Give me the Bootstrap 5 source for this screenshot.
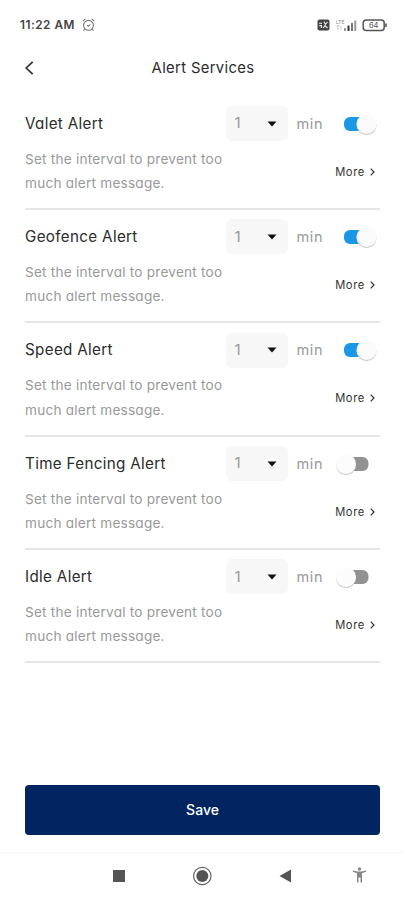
<!DOCTYPE html>
<html lang="en">
<head>
<meta charset="utf-8">
<meta name="viewport" content="width=device-width, initial-scale=1">
<title>Alert Services</title>
<link href="https://cdn.jsdelivr.net/npm/bootstrap@5.3.0/dist/css/bootstrap.min.css" rel="stylesheet">
<style>
body{font-family:Inter,"Liberation Sans",sans-serif;font-feature-settings:"cv11";color:#2b2b2b;background:#fff}
.screen{width:404px;height:900px;overflow:hidden}
svg{display:block;flex:none}
.status-bar{height:46px;padding:3px 16px 0 20px}
.clock{font-size:11.8px;font-weight:600;line-height:16px;letter-spacing:.5px;color:#444;width:54px;white-space:nowrap}
.title-bar{height:50.7px;padding:0 24px 7.5px}
.page-title{font-size:14.8px;letter-spacing:.35px;line-height:20px;margin:0;font-weight:400;white-space:nowrap;width:356px;text-align:center;padding-left:2px}
.back{width:10px;margin-right:-10px}
.alerts{padding:0 24px 0 25px}
.alert-item{height:113.3px;border-bottom:2px solid #e6e6e6}
.item-head{height:50px;padding-top:4px}
.item-name{font-size:15.2px;letter-spacing:.33px;line-height:20px;width:200.5px;white-space:nowrap}
.interval{width:62.5px;height:35px;border-radius:6px;background:#f7f7f7;color:#999;font-size:15px;padding:0 11px 0 9px}
.unit{font-size:14.5px;letter-spacing:.6px;color:#999;width:46px;padding-left:8.5px}
.switch{width:44px;height:24px}
.item-note{font-size:13.6px;letter-spacing:.23px;line-height:24.5px;color:#999;white-space:nowrap;width:311px}
.item-more{font-size:11.2px;letter-spacing:.6px;line-height:16px;color:#333;margin-top:17px;gap:5px;width:45px}
.save-wrap{padding:121.8px 24px 0 25px}
.btn-save{height:50px;background:#002561;color:#fff;border:0;border-radius:4px;font-size:14px;font-weight:500;width:355px}
.nav-keys{margin-top:17px;height:48px;border-top:1px solid #f3f3f3}
.nav-keys svg{width:404px;height:47px}
</style>
<script defer src="https://cdn.jsdelivr.net/npm/bootstrap@5.3.0/dist/js/bootstrap.bundle.min.js"></script>
</head>
<body>
<svg width="0" height="0" class="position-absolute" aria-hidden="true">
<symbol id="on" viewBox="0 0 44 24"><rect x="10" y="5" width="26" height="14" rx="6" fill="#1b97e8"/><circle cx="32.5" cy="13.3" r="10" fill="#bbb" opacity=".7"/><circle cx="32.5" cy="12" r="10" fill="#fafafa"/></symbol>
<symbol id="off" viewBox="0 0 44 24"><rect x="14" y="5" width="20.5" height="14" rx="6" fill="#929292"/><circle cx="12" cy="13.3" r="10" fill="#bbb" opacity=".7"/><circle cx="12" cy="12" r="10" fill="#fcfcfc"/></symbol>
<symbol id="caret" viewBox="0 0 10 6"><path d="M.5.5h9L5 5.5z" fill="#111"/></symbol>
<symbol id="next" viewBox="0 0 5 8"><path d="M.7.7 4 4 .7 7.3" fill="none" stroke="#333" stroke-width="1.2"/></symbol>
</svg>
<div class="screen d-flex flex-column">
<header class="status-bar d-flex align-items-center">
<span class="clock">11:22 AM</span>
<svg class="ms-2" width="13" height="14" viewBox="0 0 13 14" fill="none" stroke="#777" stroke-width="1.1"><circle cx="6.5" cy="7.3" r="4.9"/><path d="M.7 3.2 3.4.9M12.3 3.2 9.6.9M2.8 11.2 1.5 12.6M10.2 11.2l1.3 1.4M5 7.3l1.4 1 1.9-2"/></svg>
<svg class="ms-auto" width="71" height="14" viewBox="0 0 71 14">
<rect x=".5" y="1.5" width="12" height="11" rx="2" fill="#444"/><path d="M2 5.2h3M7 3.8l1.4 2.6L10.5 4M2.3 7.6h2.2v2.5M6.3 10l1.7-2.4L10.5 10" fill="none" stroke="#eee" stroke-width="1.1"/>
<text x="19" y="5.5" font-size="5" fill="#888">LTE</text><path d="M21 7v5M19.5 8.5 21 7l1.5 1.5M24 8v4" fill="none" stroke="#bbb" stroke-width=".8"/>
<path d="M27 10h2v3h-2z" fill="#999"/><path d="M30.5 7.5h2V13h-2z" fill="#333"/><path d="M34 5h2v8h-2z" fill="#777"/><path d="M37.3 2.5h2V13h-2z" fill="#999"/>
<rect x="46.2" y="2" width="21" height="10.5" rx="3" fill="#fff" stroke="#555" stroke-width="1.5"/><path d="M68 5.5h2v3.5h-2z" fill="#777"/><text x="56.7" y="10" font-size="7.5" text-anchor="middle" fill="#555">64</text></svg>
</header>
<div class="title-bar d-flex align-items-center">
<svg class="back" width="10" height="14" viewBox="0 0 10 14"><path d="M8.7.9 2.2 7l6.5 6.1" fill="none" stroke="#333" stroke-width="1.7"/></svg>
<h1 class="page-title">Alert Services</h1>
</div>
<main class="alerts" id="alerts"></main>
<div class="save-wrap"><button class="btn btn-save p-0" type="button">Save</button></div>
<footer class="nav-keys"><svg viewBox="0 0 404 47"><path d="M113 17h12v12h-12z" fill="#555"/><circle cx="202.3" cy="23" r="8.7" fill="none" stroke="#666" stroke-width="1.2"/><circle cx="202.3" cy="23" r="6" fill="#555"/><path d="M291 16.5v13L279.5 23z" fill="#555"/><g fill="#888"><circle cx="359.5" cy="16" r="1.7"/><path d="M353 17.5l4.5 1h4l4.5-1 .3 1.3-4.3 1.4v9.3h-1.5v-5h-2v5H357v-9.3l-4.3-1.4z"/></g></svg></footer>
</div>
<script>
const services=[["Valet Alert",true],["Geofence Alert",true],["Speed Alert",true],["Time Fencing Alert",false],["Idle Alert",false]];
document.getElementById("alerts").innerHTML=services.map(([name,on])=>`<section class="alert-item">
<div class="item-head d-flex align-items-center"><div class="item-name">${name}</div>
<div class="interval d-flex align-items-center justify-content-between"><span>1</span><svg width="10" height="6"><use href="#caret"/></svg></div>
<span class="unit">min</span><svg class="switch" viewBox="0 0 44 24"><use href="#${on?"on":"off"}" width="44" height="24"/></svg></div>
<div class="d-flex align-items-start"><div class="item-note">Set the interval to prevent too<br>much alert message.</div>
<div class="item-more d-flex align-items-center"><span>More</span><svg width="5" height="8"><use href="#next"/></svg></div></div>
</section>`).join("");
</script>
</body>
</html>
